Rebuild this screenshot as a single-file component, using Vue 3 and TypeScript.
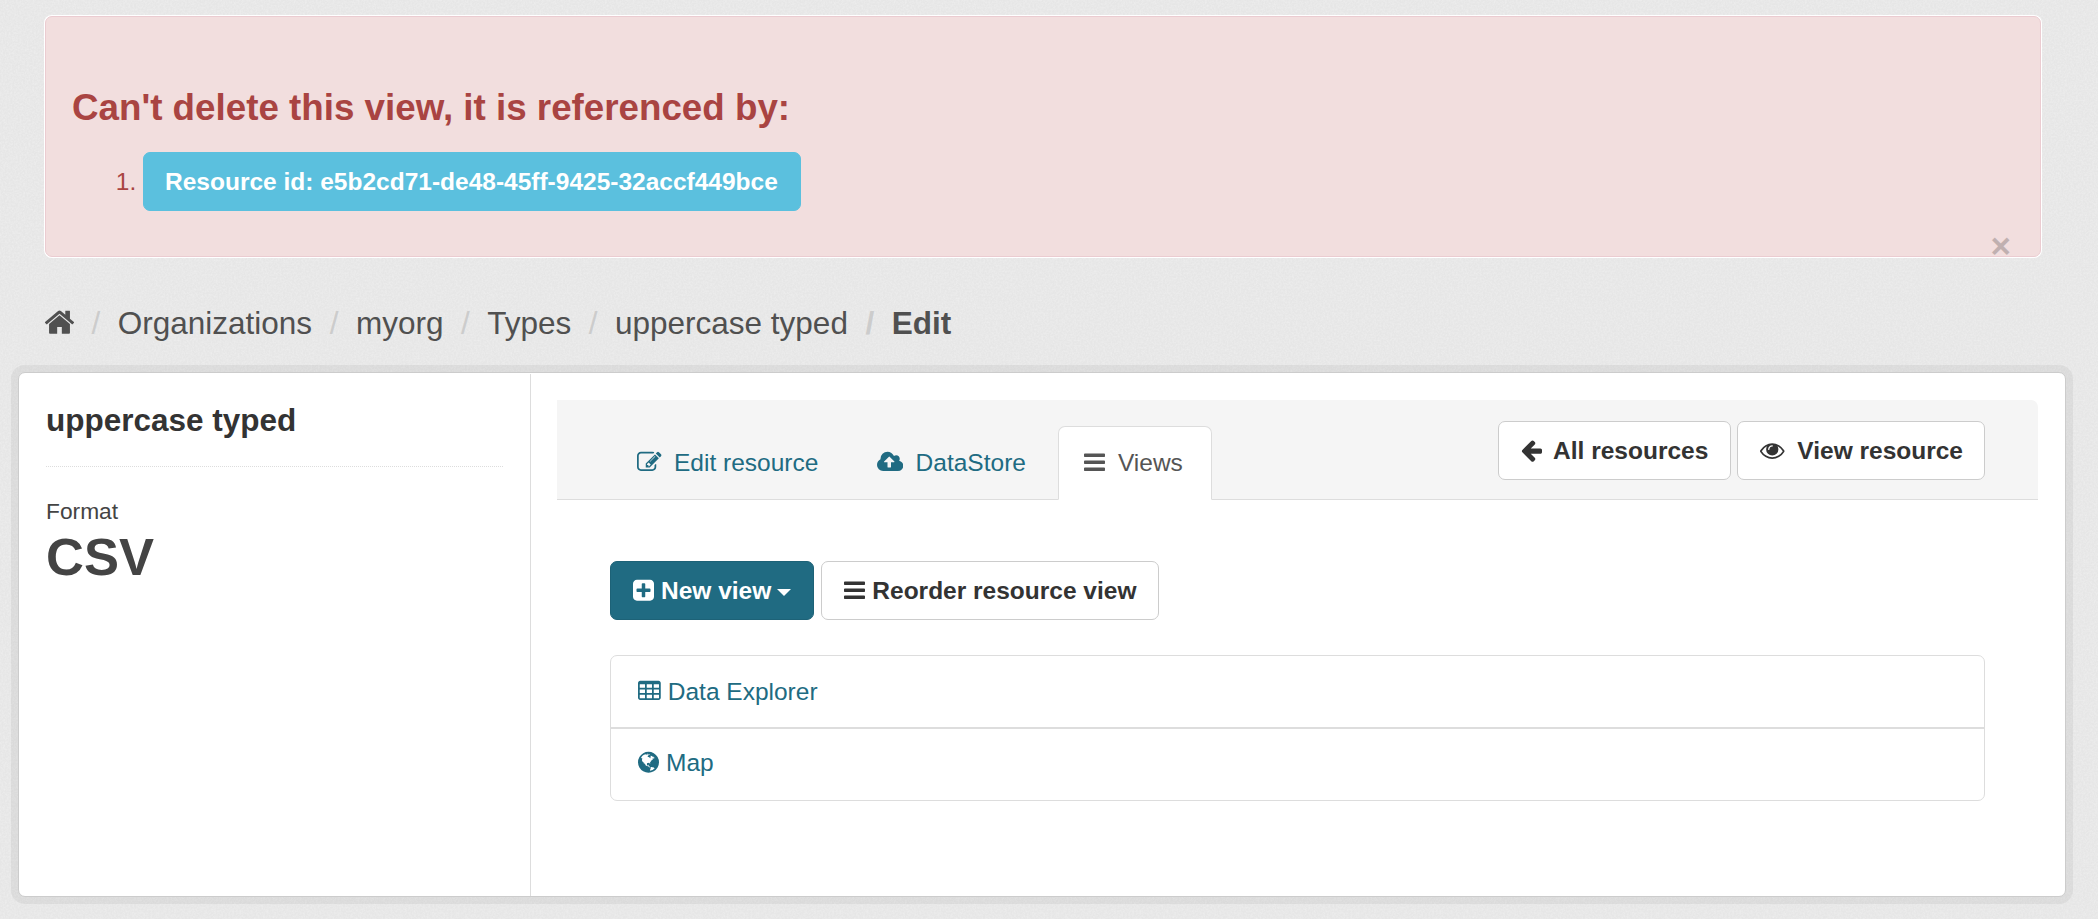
<script setup lang="ts">
const icons: Record<string, string> = {
  home: 'M1472 992v480q0 26-19 45t-45 19h-384v-384h-256v384h-384q-26 0-45-19t-19-45v-480q0-1 .5-3t.5-3l575-474 575 474q1 2 1 6zm223-69l-62 74q-8 9-21 11h-3q-13 0-21-7l-692-577-692 577q-12 8-24 7-13-2-21-11l-62-74q-8-10-7-23.5t11-21.5l719-599q32-26 76-26t76 26l244 204v-195q0-14 9-23t23-9h192q14 0 23 9t9 23v408l219 182q10 8 11 21.5t-7 23.5z',
  edit: 'M888 1184l116-116-152-152-116 116v56h96v96h56zm440-720q-16-16-33 1l-350 350q-17 17-1 33t33-1l350-350q17-17 1-33zm80 594v190q0 119-84.5 203.5t-203.5 84.5h-832q-119 0-203.5-84.5t-84.5-203.5v-832q0-119 84.5-203.5t203.5-84.5h832q63 0 117 25 15 7 18 23 3 17-9 29l-49 49q-14 14-32 8-23-6-45-6h-832q-66 0-113 47t-47 113v832q0 66 47 113t113 47h832q66 0 113-47t47-113v-126q0-13 9-22l64-64q15-15 35-7t20 29zm-96-738l288 288-672 672h-288v-288zm444 132l-92 92-288-288 92-92q28-28 68-28t68 28l152 152q28 28 28 68t-28 68z',
  cloud: 'M1280 864q0-14-9-23l-352-352q-9-9-23-9t-23 9l-351 351q-10 12-10 24 0 14 9 23t23 9h224v352q0 13 9.5 22.5t22.5 9.5h192q13 0 22.5-9.5t9.5-22.5v-352h224q13 0 22.5-9.5t9.5-22.5zm640 288q0 159-112.5 271.5t-271.5 112.5h-1088q-185 0-316.5-131.5t-131.5-316.5q0-130 70-240t188-165q-2-30-2-43 0-212 150-362t362-150q156 0 285.5 87t188.5 231q71-62 166-62 106 0 181 75t75 181q0 76-41 138 130 31 213.5 135.5t83.5 238.5z',
  bars: 'M1664 1344v128q0 26-19 45t-45 19h-1408q-26 0-45-19t-19-45v-128q0-26 19-45t45-19h1408q26 0 45 19t19 45zm0-512v128q0 26-19 45t-45 19h-1408q-26 0-45-19t-19-45v-128q0-26 19-45t45-19h1408q26 0 45 19t19 45zm0-512v128q0 26-19 45t-45 19h-1408q-26 0-45-19t-19-45v-128q0-26 19-45t45-19h1408q26 0 45 19t19 45z',
  plus: 'M1408 960v-128q0-26-19-45t-45-19h-320v-320q0-26-19-45t-45-19h-128q-26 0-45 19t-19 45v320h-320q-26 0-45 19t-19 45v128q0 26 19 45t45 19h320v320q0 26 19 45t45 19h128q26 0 45-19t19-45v-320h320q26 0 45-19t19-45zm256-544v960q0 119-84.5 203.5t-203.5 84.5h-960q-119 0-203.5-84.5t-84.5-203.5v-960q0-119 84.5-203.5t203.5-84.5h960q119 0 203.5 84.5t84.5 203.5z',
  back: 'M1664 896v128q0 53-32.5 90.5t-84.5 37.5h-704l293 294q38 36 38 90t-38 90l-75 76q-37 37-90 37-52 0-91-37l-651-652q-37-37-37-90 0-52 37-91l651-650q38-38 91-38 52 0 90 38l75 74q38 38 38 91t-38 91l-293 293h704q52 0 84.5 37.5t32.5 90.5z',
  eye: 'M1664 960q-152-236-381-353 61 104 61 225 0 185-131.5 316.5t-316.5 131.5-316.5-131.5-131.5-316.5q0-121 61-225-229 117-381 353 133 205 333.5 326.5t434.5 121.5 434.5-121.5 333.5-326.5zm-720-384q0-20-14-34t-34-14q-125 0-214.5 89.5t-89.5 214.5q0 20 14 34t34 14 34-14 14-34q0-86 61-147t147-61q20 0 34-14t14-34zm848 384q0 34-20 69-140 230-376.5 368.5t-499.5 138.5-499.5-139-376.5-368q-20-35-20-69t20-69q140-229 376.5-368t499.5-139 499.5 139 376.5 368q20 35 20 69z',
  table: 'M576 1376v-192q0-14-9-23t-23-9h-320q-14 0-23 9t-9 23v192q0 14 9 23t23 9h320q14 0 23-9t9-23zm0-384v-192q0-14-9-23t-23-9h-320q-14 0-23 9t-9 23v192q0 14 9 23t23 9h320q14 0 23-9t9-23zm512 384v-192q0-14-9-23t-23-9h-320q-14 0-23 9t-9 23v192q0 14 9 23t23 9h320q14 0 23-9t9-23zm-512-768v-192q0-14-9-23t-23-9h-320q-14 0-23 9t-9 23v192q0 14 9 23t23 9h320q14 0 23-9t9-23zm512 384v-192q0-14-9-23t-23-9h-320q-14 0-23 9t-9 23v192q0 14 9 23t23 9h320q14 0 23-9t9-23zm512 384v-192q0-14-9-23t-23-9h-320q-14 0-23 9t-9 23v192q0 14 9 23t23 9h320q14 0 23-9t9-23zm-512-768v-192q0-14-9-23t-23-9h-320q-14 0-23 9t-9 23v192q0 14 9 23t23 9h320q14 0 23-9t9-23zm512 384v-192q0-14-9-23t-23-9h-320q-14 0-23 9t-9 23v192q0 14 9 23t23 9h320q14 0 23-9t9-23zm0-384v-192q0-14-9-23t-23-9h-320q-14 0-23 9t-9 23v192q0 14 9 23t23 9h320q14 0 23-9t9-23zm128-320v1088q0 66-47 113t-113 47h-1344q-66 0-113-47t-47-113v-1088q0-66 47-113t113-47h1344q66 0 113 47t47 113z',
  globe: 'M896 128q209 0 385.5 103t279.5 279.5 103 385.5-103 385.5-279.5 279.5-385.5 103-385.5-103-279.5-279.5-103-385.5 103-385.5 279.5-279.5 385.5-103zm274 521q-2 1-9.5 9.5t-13.5 9.5q2 0 4.5-5t5-11 3.5-7q6-7 22-15 14-6 52-12 34-8 51 11-2-2 9.5-13t14.5-12q3-2 15-4.5t15-7.5l2-22q-12 1-17.5-7t-6.5-21q0 2-6 8 0-7-4.5-8t-11.5 1-9 1q-10-3-15-7.5t-8-16.5-4-15q-2-5-9.5-11t-9.5-10q-1-2-2.5-5.5t-3-6.5-4-5.5-5.5-2.5-7 5-7.5 10-4.5 5q-3-2-6-1.5t-4.5 1-4.5 3-5 3.5q-3 2-8.5 3t-8.5 2q15-5-1-11-10-4-16-3 9-4 7.5-12t-8.5-14h5q-1-4-8.5-8.5t-17.5-8.5-13-6q-8-5-34-9.5t-33-.5q-5 6-4.5 10.5t4 14 3.5 12.5q1 6-5.5 13t-6.5 12q0 7 14 15.5t10 21.5q-3 8-16 16t-16 12q-5 8-1.5 18.5t10.5 16.5q2 2 1.5 4t-3.5 4.5-5.5 4-6.5 3.5l-3 2q-11 5-20.5-6t-13.5-26q-7-25-16-30-23-8-29 1-5-13-41-26-25-9-58-4 6-1 0-15-7-15-19-12 3-6 4-17.5t1-13.5q3-13 12-23 1-1 7-8.5t9.5-13.5.5-6q35 4 50-11 5-5 11.5-17t10.5-17q9-6 14-5.5t14.5 5.5 14.5 5q14 1 15.5-11t-7.5-20q12 1 3-17-4-7-8-9-12-4-27 5-8 4 2 8-1-1-9.5 10.5t-16.5 17.5-16-5q-1-1-5.5-13.5t-9.5-13.5q-8 0-16 15 3-8-11-15t-24-8q19-12-8-27-7-4-20.5-5t-19.5 4q-5 7-5.5 11.5t5 8 10.5 5.5 11.5 4 8.5 3q14 10 8 14-2 1-8.5 3.5t-11.5 4.5-6 4q-3 4 0 14t-2 14q-5-5-9-17.5t-7-16.5q7 9-25 6l-10-1q-4 0-16 2t-20.5 1-13.5-8q-4-8 0-20 1-4 4-2-4-3-11-9.5t-10-8.5q-46 15-94 41 6 1 12-1 5-2 13-6.5t10-5.5q34-14 42-7l5-5q14 16 20 25-7-4-30-1-20 6-22 12 7 12 5 18-4-3-11.5-10t-14.5-11-15-5q-16 0-22 1-146 80-235 222 7 7 12 8 4 1 5 9t2.5 11 11.5-3q9 8 3 19 1-1 44 27 19 17 21 21 3 11-10 18-1-2-9-9t-9-4q-3 5 .5 18.5t10.5 12.5q-7 0-9.5 16t-2.5 35.5-1 23.5l2 1q-3 12 5.5 34.5t21.5 19.5q-13 3 20 43 6 8 8 9 3 2 12 7.5t15 10 10 10.5q4 5 10 22.5t14 23.5q-2 6 9.5 20t10.5 23q-1 0-2.5 1t-2.5 1q3 7 15.5 14t15.5 13q1 3 2 10t3 11 8 2q2-20-24-62-15-25-17-29-3-5-5.5-15.5t-4.5-14.5q2 0 6 1.5t8.5 3.5 7.5 4 2 3q-3 7 2 17.5t12 18.5 17 19 12 13q6 6 14 19.5t0 13.5q9 0 20 10.5t17 19.5q5 8 8 26t5 24q2 7 8.5 13.5t12.5 9.5l16 8 13 7q5 2 18.5 10.5t21.5 11.5q10 4 16 4t14.5-2.5 13.5-3.5q15-2 29 15t21 21q36 19 55 11-2 1 .5 7.5t8 15.5 9 14.5 5.5 8.5q5 6 18 15t18 15q6-4 7-9-3 8 7 20t18 10q14-3 14-32-31 15-49-18 0-1-2.5-5.5t-4-8.5-2.5-8.5 0-7.5 5-3q9 0 10-3.5t-2-12.5-4-13q-1-8-11-20t-12-15q-5 9-16 8t-16-9q0 1-1.5 5.5t-1.5 6.5q-13 0-15-1 1-3 2.5-17.5t3.5-22.5q1-4 5.5-12t7.5-14.5 4-12.5-4.5-9.5-17.5-2.5q-19 1-26 20-1 3-3 10.5t-5 11.5-9 7q-7 3-24 2t-24-5q-13-8-22.5-29t-9.5-37q0-10 2.5-26.5t3-25-5.5-24.5q3-2 9-9.5t10-10.5q2-1 4.5-1.5t4.5 0 4-1.5 3-6q-1-1-4-3-3-3-4-3 7 3 28.5-1.5t27.5 1.5q15 11 22-2 0-1-2.5-9.5t-.5-13.5q5 27 29 9 3 3 15.5 5t17.5 5q3 2 7 5.5t5.5 4.5 5-.5 8.5-6.5q10 14 12 24 11 40 19 44 7 3 11 2t4.5-9.5 0-14-1.5-12.5l-1-8v-18l-1-8q-15-3-18.5-12t1.5-18.5 15-18.5q1-1 8-3.5t15.5-6.5 12.5-8q21-19 15-35 7 0 11-9-1 0-5-3t-7.5-5-4.5-2q9-5 2-16 5-3 7.5-11t7.5-10q9 12 21 2 8-8 1-16 5-7 20.5-10.5t18.5-9.5q7 2 8-2t1-12 3-12q4-5 15-9t13-5l17-11q3-4 0-4 18 2 31-11 10-11-6-20 3-6-3-9.5t-15-5.5q3-1 11.5-.5t10.5-1.5q15-10-7-16-17-5-43 12zm-163 877q206-36 351-189-3-3-12.5-4.5t-12.5-3.5q-18-7-24-8 1-7-2.5-13t-8-9-12.5-8-11-7q-2-2-7-6t-7-5.5-7.5-4.5-8.5-2-10 1l-3 1q-3 1-5.5 2.5t-5.5 3-4 3 0 2.5q-21-17-36-22-5-1-11-5.5t-10.5-7-10-1.5-11.5 7q-5 5-6 15t-2 13q-7-5 0-17.5t2-18.5q-3-6-10.5-4.5t-12 4.5-11.5 8.5-9 6.5-8.5 5.5-8.5 7.5q-3 4-6 12t-5 11q-2-4-11.5-6.5t-9.5-5.5q2 10 4 35t5 38q7 31-12 48-27 25-29 40-4 22 12 26 0 7-8 20.5t-7 21.5q0 6 2 16z',
}

const crumbs = ['Organizations', 'myorg', 'Types', 'uppercase typed']
const tabs = [
  { label: 'Edit resource', icon: 'edit', cls: 'w-full' },
  { label: 'DataStore', icon: 'cloud', cls: 'w-cloud' },
  { label: 'Views', icon: 'bars', cls: 'w-bar', active: true },
]
const views = [
  { label: 'Data Explorer', icon: 'table', cls: 'w-table' },
  { label: 'Map', icon: 'globe', cls: 'w-bar' },
]
</script>

<template>
  <div class="page">
    <div class="alert">
      <h3 class="alert-title">Can't delete this view, it is referenced by:</h3>
      <ol class="refs">
        <li><a class="btn btn-info">Resource id: e5b2cd71-de48-45ff-9425-32accf449bce</a></li>
      </ol>
      <span class="close">×</span>
    </div>

    <nav class="breadcrumb">
      <span class="crumb">
        <svg class="fa w-home" viewBox="96 0 1600 1792"><path :d="icons.home" /></svg>
      </span>
      <span v-for="c in crumbs" :key="c" class="crumb">{{ c }}</span>
      <span class="crumb current">Edit</span>
    </nav>

    <div class="wrapper">
      <aside class="sidebar">
        <h2 class="res-title">uppercase typed</h2>
        <hr class="rule" />
        <div class="format-label">Format</div>
        <div class="format-value">CSV</div>
      </aside>

      <main class="primary">
        <div class="page-header">
          <ul class="tabs">
            <li v-for="t in tabs" :key="t.label" class="tab" :class="{ active: t.active }">
              <svg class="fa" :class="t.cls" :viewBox="t.icon === 'cloud' ? '0 0 1920 1792' : t.icon === 'bars' ? '128 0 1536 1792' : '0 0 1792 1792'">
                <path :d="icons[t.icon]" />
              </svg>{{ t.label }}
            </li>
          </ul>
          <div class="actions">
            <a class="btn btn-default">
              <svg class="fa w-back" viewBox="128 0 1600 1792"><path :d="icons.back" /></svg>All resources
            </a>
            <a class="btn btn-default">
              <svg class="fa w-full eye" viewBox="0 0 1792 1792"><path :d="icons.eye" /></svg>View resource
            </a>
          </div>
        </div>

        <div class="content">
          <div class="toolbar">
            <a class="btn btn-primary">
              <svg class="fa w-bar tight" viewBox="128 0 1536 1792"><path :d="icons.plus" /></svg>New view<span class="caret"></span>
            </a>
            <a class="btn btn-default">
              <svg class="fa w-bar tight" viewBox="128 0 1536 1792"><path :d="icons.bars" /></svg>Reorder resource view
            </a>
          </div>

          <ul class="view-list">
            <li v-for="v in views" :key="v.label" class="view-item">
              <svg class="fa tight-list" :class="v.cls" :viewBox="v.icon === 'table' ? '64 0 1664 1792' : '128 0 1536 1792'">
                <path :d="icons[v.icon]" />
              </svg>{{ v.label }}
            </li>
          </ul>
        </div>
      </main>
    </div>
  </div>
</template>

<style scoped>
.page {
  font-family: 'Liberation Sans', Arial, sans-serif;
  font-size: 24.5px;
  line-height: 35px;
  color: #444;
  padding: 16px 32px 16px 18px;
  box-sizing: border-box;
  min-height: 919px;
}

.fa {
  display: inline-block;
  width: 1em;
  height: 1em;
  fill: currentColor;
  vertical-align: -3px;
  margin-right: 12.5px;
}
.w-full { width: 24.5px; }
.w-cloud { width: 26.25px; }
.w-bar { width: 21px; }
.w-table { width: 22.75px; }
.w-back { width: 21.9px; margin-right: 10px; }
.w-home { width: 29px; height: 32.5px; margin: 0 0 0 -1px; vertical-align: -4px; }
.fa.tight { margin-right: 7px; }
.fa.tight-list { margin-right: 7px; }

.alert {
  position: relative;
  margin: 0 25px 0 27px;
  height: 241px;
  box-sizing: border-box;
  padding: 73px 26px 0 26px;
  background: #f2dede;
  border: 1px solid #ebccd1;
  border-radius: 7px;
  box-shadow: 0 0 0 1px #fff;
  color: #a94442;
}
.alert-title {
  margin: 0;
  font-size: 36.75px;
  line-height: 35px;
  font-weight: 700;
}
.refs {
  margin: 27px 0 0;
  padding: 0 0 0 71px;
}
.close {
  position: absolute;
  right: 29px;
  top: 211px;
  font-size: 35px;
  line-height: 35px;
  font-weight: 700;
  color: #000;
  opacity: 0.2;
}

.btn {
  display: inline-block;
  padding: 11px 21px 11px 22px;
  line-height: 35px;
  font-size: 24.5px;
  font-weight: 700;
  border: 1px solid transparent;
  border-radius: 7px;
  white-space: nowrap;
}
.btn-info { padding-left: 21px; padding-right: 22px; background: #5bc0de; border-color: #5bc0de; color: #fff; }
.btn-default { background: #fff; border-color: #ccc; color: #333; }
.btn-primary { padding-right: 22px; background: #206b82; border-color: #1d6277; color: #fff; }
.actions .btn:first-child { padding-right: 22px; }

.breadcrumb {
  display: flex;
  align-items: center;
  margin: 44px 0 0 28px;
  height: 44px;
  font-size: 31.5px;
  line-height: 44px;
  color: #505050;
}
.crumb + .crumb::before {
  content: '/';
  padding: 0 17.5px;
  color: #ccc;
}
.crumb svg { color: #505050; }
.current { font-weight: 700; }

.wrapper {
  display: flex;
  margin-top: 27px;
  height: 523px;
  background: #fff;
  border: 1px solid #ccc;
  border-radius: 7px;
  box-shadow: 0 0 0 7px rgba(0, 0, 0, 0.05);
}

.sidebar {
  width: 512px;
  flex-shrink: 0;
  box-sizing: border-box;
  padding: 18px 27px 0 27px;
  margin-top: 1px;
  border-right: 1px solid #ddd;
}
.res-title {
  margin: 10px 0 28px;
  font-size: 31.5px;
  line-height: 36px;
  font-weight: 700;
  color: #333;
}
.rule {
  margin: 0;
  border: 0;
  border-top: 1px dotted #ddd;
}
.format-label {
  margin-top: 29px;
  font-size: 22.75px;
  line-height: 30px;
}
.format-value {
  font-size: 52.5px;
  line-height: 62px;
  font-weight: 700;
}

.primary {
  flex: 1;
  min-width: 0;
  padding: 27px 27px 0 26px;
}
.page-header {
  display: flex;
  height: 100px;
  box-sizing: border-box;
  background: #f5f5f5;
  border-bottom: 1px solid #ddd;
  border-radius: 0 7px 0 0;
}
.tabs {
  display: flex;
  gap: 3.5px;
  align-self: flex-end;
  list-style: none;
  margin: 0 0 -1px 54px;
  padding: 0;
}
.tab {
  padding: 18px 28px 18px 25px;
  line-height: 36px;
  border: 1px solid transparent;
  border-radius: 7px 7px 0 0;
  color: #206b82;
  white-space: nowrap;
}
.tab.active {
  background: #fff;
  border-color: #ddd;
  border-bottom-color: #fff;
  color: #555;
}
.actions {
  display: flex;
  gap: 6px;
  margin: 21px 53px 0 auto;
  align-self: flex-start;
}

.content {
  padding: 61px 53px 0;
}
.toolbar {
  display: flex;
  gap: 7px;
}
.caret {
  display: inline-block;
  margin-left: 6px;
  vertical-align: middle;
  border-top: 7px solid currentColor;
  border-left: 7px solid transparent;
  border-right: 7px solid transparent;
}
.view-list {
  list-style: none;
  margin: 35px 0 0;
  padding: 0;
  border: 1px solid #ddd;
  border-radius: 7px;
}
.view-item {
  padding: 18px 21px 18px 27px;
  line-height: 35px;
  color: #206b82;
}
.view-item + .view-item {
  padding-top: 16px;
  padding-bottom: 20px;
  border-top: 2px solid #ddd;
}
</style>

<style>
html, body {
  margin: 0;
  background-color: #e6e6e6;
  background-image: url("data:image/svg+xml,%3Csvg xmlns='http://www.w3.org/2000/svg' width='300' height='300'%3E%3Cfilter id='n'%3E%3CfeTurbulence type='fractalNoise' baseFrequency='0.55' numOctaves='3' seed='4'/%3E%3CfeColorMatrix values='0 0 0 0 1 0 0 0 0 1 0 0 0 0 1 0.5 0 0 0 -0.16'/%3E%3C/filter%3E%3Crect width='300' height='300' filter='url(%23n)'/%3E%3C/svg%3E");
}
</style>
